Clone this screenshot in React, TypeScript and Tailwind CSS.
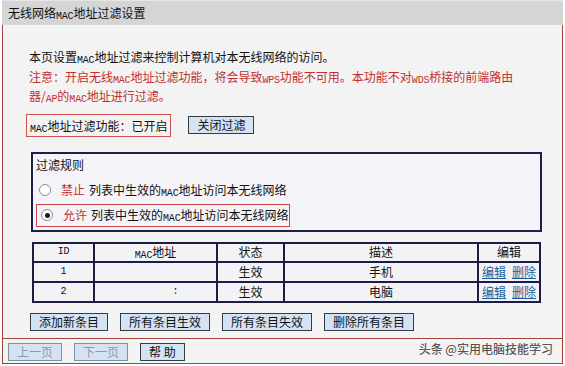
import React from "react";

const font = { fontFamily: '"Noto Sans CJK SC", "Noto Sans", sans-serif' };

function M({ children }: { children: React.ReactNode }) {
    return <span className="text-[10px] leading-[0] align-[-1px] font-['Liberation_Mono',monospace] tracking-[-0.2px]">{children}</span>;
}

function Btn({ children, disabled }: { children: React.ReactNode; disabled?: boolean }) {
    return (
        <button
            className={
                "h-[18px] px-[8px] text-[12px] leading-[16px] bg-[#d4e3f4] border " +
                (disabled ? "border-[#7f8fa0] text-[#8e9aa6]" : "border-[#333b45] text-[#111]")
            }
        >
            {children}
        </button>
    );
}

function Radio({ checked }: { checked?: boolean }) {
    return (
        <span className="w-[12px] h-[12px] rounded-full border border-[#8c8c8c] bg-white flex items-center justify-center shrink-0">
            {checked && <span className="w-[5px] h-[5px] rounded-full bg-[#1a1a1a]" />}
        </span>
    );
}

const cell = "bg-[#f3f3f6] flex items-center justify-center text-[12px] leading-[16px] text-[#111]";

export default function App() {
    const rows = [
        { id: "1", mac: "", desc: "手机" },
        { id: "2", mac: ":", desc: "电脑" },
    ];
    return (
        <div className="w-[565px] h-[366px] bg-white px-[2px] overflow-hidden" style={font}>
            <div className="h-[25px] bg-[#d5d5d5] border-t border-[#e6e6e6] flex items-center pl-[6px] text-[12px] text-[#111]">
                <span>无线网络<M>MAC</M>地址过滤设置</span>
            </div>
            <div className="border-x border-b border-[#a2433c] bg-[#f3f3f3]">
                <div className="h-[313px] pl-[23px] pt-[22px]">
                    <div className="pl-[3px] text-[12px] leading-[19.5px] whitespace-nowrap">
                        <div className="h-[19.5px] text-[#111]">本页设置<M>MAC</M>地址过滤来控制计算机对本无线网络的访问。</div>
                        <div className="h-[19.5px] text-[#c0302e]">
                            注意：开启无线<M>MAC</M>地址过滤功能，将会导致<M>WPS</M>功能不可用。本功能不对<M>WDS</M>桥接的前端路由
                        </div>
                        <div className="h-[19.5px] text-[#c0302e]">
                            器/<M>AP</M>的<M>MAC</M>地址进行过滤。
                        </div>
                    </div>

                    <div className="mt-[8px] flex items-center gap-[17px]">
                        <div className="h-[23px] border border-[#d24f4f] px-[3px] text-[12px] leading-[21px] text-[#111]">
                            <M>MAC</M>地址过滤功能：已开启
                        </div>
                        <Btn>关闭过滤</Btn>
                    </div>

                    <div className="mt-[15px] ml-[5px] w-[511px] h-[80px] border-2 border-[#1f1f4c] bg-[#f4f4f8] text-[12px] leading-[16px] text-[#111]">
                        <div className="h-[22px] flex items-center pl-[3px] pt-[1px]">过滤规则</div>
                        <div className="h-[28px] flex items-center pl-[6px]">
                            <Radio />
                            <span className="ml-[10px] text-[#c0302e]">禁止</span>
                            <span className="ml-[4px]">列表中生效的<M>MAC</M>地址访问本无线网络</span>
                        </div>
                        <div className="ml-[3px] w-[254px] h-[23px] border border-[#c9474a] flex items-center pl-[4px]">
                            <Radio checked />
                            <span className="ml-[10px] text-[#c0302e]">允许</span>
                            <span className="ml-[4px]">列表中生效的<M>MAC</M>地址访问本无线网络</span>
                        </div>
                    </div>

                    <div className="mt-[10px] ml-[6px] w-[509px] bg-[#1c1c48] p-[2px] grid grid-cols-[59px_121px_65px_192px_60px] grid-rows-[17px_18px_18px] gap-[2px]">
                        <div className={cell}><M>ID</M></div>
                        <div className={cell}><span><M>MAC</M>地址</span></div>
                        <div className={cell}>状态</div>
                        <div className={cell}>描述</div>
                        <div className={cell}>编辑</div>
                        {rows.map((r) => (
                            <React.Fragment key={r.id}>
                                <div className={cell}><M>{r.id}</M></div>
                                <div className={cell + " pl-[40px]"}><M>{r.mac}</M></div>
                                <div className={cell}>生效</div>
                                <div className={cell}>{r.desc}</div>
                                <div className={cell + " gap-[6px]"}>
                                    <a className="text-[#1c5f9c] underline">编辑</a>
                                    <a className="text-[#1c5f9c] underline">删除</a>
                                </div>
                            </React.Fragment>
                        ))}
                    </div>

                    <div className="mt-[10px] ml-[4px] flex gap-[12px]">
                        <Btn>添加新条目</Btn>
                        <Btn>所有条目生效</Btn>
                        <Btn>所有条目失效</Btn>
                        <Btn>删除所有条目</Btn>
                    </div>
                </div>

                <div className="relative border-t border-[#a2433c] h-[25px] pt-[4px] pl-[5px] flex gap-[12px] items-start">
                    <Btn disabled>上一页</Btn>
                    <Btn disabled>下一页</Btn>
                    <Btn>帮&nbsp;助</Btn>
                    <span className="absolute right-[9px] top-[0px] text-[12px] leading-[20px] font-medium text-[#555] [text-shadow:0_0_2px_#fff,0_0_1px_#fff]">
                        头条 @实用电脑技能学习
                    </span>
                </div>
            </div>
        </div>
    );
}
